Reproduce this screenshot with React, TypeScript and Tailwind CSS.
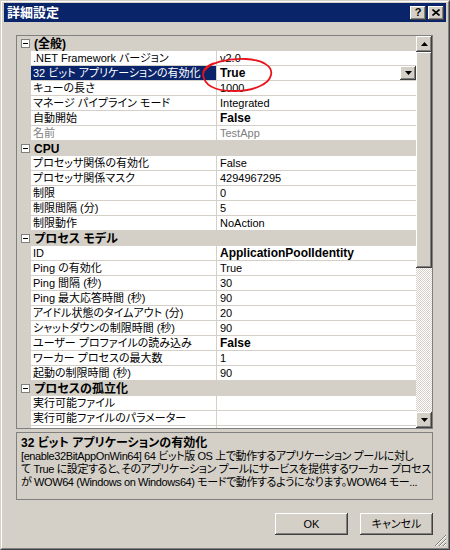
import React from "react"

type Row = {
  name: string
  value?: string
  bold?: boolean
  dim?: boolean
  selected?: boolean
}

type Section = { title: string; rows: Row[] }

const sections: Section[] = [
  {
    title: "(全般)",
    rows: [
      { name: ".NET Framework バージョン", value: "v2.0" },
      { name: "32 ビット アプリケーションの有効化", value: "True", bold: true, selected: true },
      { name: "キューの長さ", value: "1000" },
      { name: "マネージ パイプライン モード", value: "Integrated" },
      { name: "自動開始", value: "False", bold: true },
      { name: "名前", value: "TestApp", dim: true },
    ],
  },
  {
    title: "CPU",
    rows: [
      { name: "プロセッサ関係の有効化", value: "False" },
      { name: "プロセッサ関係マスク", value: "4294967295" },
      { name: "制限", value: "0" },
      { name: "制限間隔 (分)", value: "5" },
      { name: "制限動作", value: "NoAction" },
    ],
  },
  {
    title: "プロセス モデル",
    rows: [
      { name: "ID", value: "ApplicationPoolIdentity", bold: true },
      { name: "Ping の有効化", value: "True" },
      { name: "Ping 間隔 (秒)", value: "30" },
      { name: "Ping 最大応答時間 (秒)", value: "90" },
      { name: "アイドル状態のタイムアウト (分)", value: "20" },
      { name: "シャットダウンの制限時間 (秒)", value: "90" },
      { name: "ユーザー プロファイルの読み込み", value: "False", bold: true },
      { name: "ワーカー プロセスの最大数", value: "1" },
      { name: "起動の制限時間 (秒)", value: "90" },
    ],
  },
  {
    title: "プロセスの孤立化",
    rows: [
      { name: "実行可能ファイル", value: "" },
      { name: "実行可能ファイルのパラメーター", value: "" },
      { name: "", value: "" },
    ],
  },
]

const raised =
  "bg-[#d4d0c8] shadow-[inset_-1px_-1px_0_#404040,inset_1px_1px_0_#ffffff,inset_-2px_-2px_0_#808080,inset_2px_2px_0_#d4d0c8]"

function Arrow({ down }: { down?: boolean }) {
  return (
    <svg width="7" height="4" viewBox="0 0 7 4" className="block">
      {down ? <path d="M0 0h7L3.5 4z" fill="#000" /> : <path d="M0 4h7L3.5 0z" fill="#000" />}
    </svg>
  )
}

function CollapseBox() {
  return (
    <div className="flex h-[9px] w-[9px] items-center justify-center border border-[#808080] bg-white">
      <div className="h-px w-[5px] bg-black" />
    </div>
  )
}

export default function App() {
  return (
    <div className="relative h-[550px] w-[450px] overflow-hidden border border-t-[#d4d0c8] border-l-[#d4d0c8] border-r-[#404040] border-b-[#404040] bg-[#d4d0c8] font-['Liberation_Sans','Noto_Sans_CJK_JP',sans-serif] text-[11px] leading-none text-black [font-feature-settings:'palt']">
      <div className="flex h-full flex-col border border-t-white border-l-white border-r-[#808080] border-b-[#808080] px-[2px] pt-px">
        {/* title bar */}
        <div className="flex h-[19px] shrink-0 items-center justify-between bg-[#0a246a] pl-[3px] pr-[2px]">
          <span className="text-[13px] font-bold text-white">詳細設定</span>
          <div className="flex gap-[2px]">
            <div className={`flex h-[14px] w-[16px] items-center justify-center ${raised}`}>
              <span className="text-[11px] font-bold leading-none">?</span>
            </div>
            <div className={`flex h-[14px] w-[16px] items-center justify-center ${raised}`}>
              <svg width="8" height="7" viewBox="0 0 8 7">
                <path d="M0.5 0.5L7.5 6.5M7.5 0.5L0.5 6.5" stroke="#000" strokeWidth="1.6" />
              </svg>
            </div>
          </div>
        </div>

        {/* property grid */}
        <div className="ml-[12px] mt-[13px] flex h-[394px] w-[417px] shrink-0 border border-[#808080] bg-white">
          <div className="flex w-[399px] flex-col overflow-hidden">
            {sections.map((s) => (
              <React.Fragment key={s.title}>
                <div className="flex h-[15px] shrink-0 items-center bg-[#d4d0c8]">
                  <div className="flex w-[14px] justify-end pr-[1px]">
                    <CollapseBox />
                  </div>
                  <span className="pl-[3px] text-[12px] font-bold">{s.title}</span>
                </div>
                {s.rows.map((r, i) => (
                  <div key={r.name + i} className="flex h-[15px] shrink-0">
                    <div className="w-[14px] shrink-0 bg-[#d4d0c8]" />
                    <div
                      className={`flex w-[186px] shrink-0 items-center whitespace-nowrap border-r border-b border-[#d4d0c8] pl-[2px] ${
                        r.selected ? "bg-[#0a246a] text-white" : r.dim ? "text-[#808080]" : ""
                      }`}
                    >
                      {r.name}
                    </div>
                    <div className="flex flex-1 items-center justify-between border-b border-[#d4d0c8] pl-[3px]">
                      <span className={`${r.bold ? "text-[12px] font-bold" : ""} ${r.dim ? "text-[#808080]" : ""}`}>
                        {r.value}
                      </span>
                      {r.selected && (
                        <div className={`flex h-[14px] w-[16px] items-center justify-center ${raised}`}>
                          <Arrow down />
                        </div>
                      )}
                    </div>
                  </div>
                ))}
              </React.Fragment>
            ))}
          </div>

          {/* scrollbar */}
          <div className="flex w-[16px] flex-col">
            <div className={`flex h-[16px] shrink-0 items-center justify-center ${raised}`}>
              <Arrow />
            </div>
            <div className={`h-[216px] shrink-0 ${raised}`} />
            <div className="flex-1 bg-[repeating-conic-gradient(#ffffff_0_25%,#d4d0c8_0_50%)] bg-[length:2px_2px]" />
            <div className={`flex h-[16px] shrink-0 items-center justify-center ${raised}`}>
              <Arrow down />
            </div>
          </div>
        </div>

        {/* description */}
        <div className="ml-[12px] mt-[3px] flex h-[68px] w-[417px] shrink-0 flex-col overflow-hidden border border-[#808080] px-[4px] pt-[4px]">
          <div className="h-[14px] text-[12px] font-bold">32 ビット アプリケーションの有効化</div>
          <div className="h-[13px] whitespace-nowrap tracking-[-0.4px]">
            [enable32BitAppOnWin64] 64 ビット版 OS 上で動作するアプリケーション プールに対し
          </div>
          <div className="h-[13px] whitespace-nowrap tracking-[-0.4px]">
            て True に設定すると、そのアプリケーション プールにサービスを提供するワーカー プロセス
          </div>
          <div className="h-[13px] whitespace-nowrap tracking-[-0.4px]">
            が WOW64 (Windows on Windows64) モードで動作するようになります。WOW64 モー...
          </div>
        </div>

        {/* buttons */}
        <div className="mt-[13px] flex justify-end gap-[12px] pr-[13px]">
          <button className={`h-[22px] w-[73px] ${raised}`}>OK</button>
          <button className={`h-[22px] w-[73px] ${raised}`}>キャンセル</button>
        </div>
      </div>

      {/* annotation ellipse */}
      <svg className="pointer-events-none absolute left-[199px] top-[55px]" width="75" height="38" viewBox="0 0 75 38">
        <path
          d="M3 18 C6 6 30 2 46 3 C64 4 73 11 71 19 C69 29 52 35 34 35 C16 35 4 30 3 18 C3 13 8 9 14 7"
          fill="none"
          stroke="#e8141c"
          strokeWidth="1.8"
        />
      </svg>

      {/* size grip */}
      <svg className="absolute bottom-[2px] right-[2px]" width="13" height="13" viewBox="0 0 13 13">
        <path d="M12 1L1 12M12 5L5 12M12 9L9 12" stroke="#808080" strokeWidth="1" />
        <path d="M12 2L2 12M12 6L6 12M12 10L10 12" stroke="#ffffff" strokeWidth="1" />
      </svg>
    </div>
  )
}
